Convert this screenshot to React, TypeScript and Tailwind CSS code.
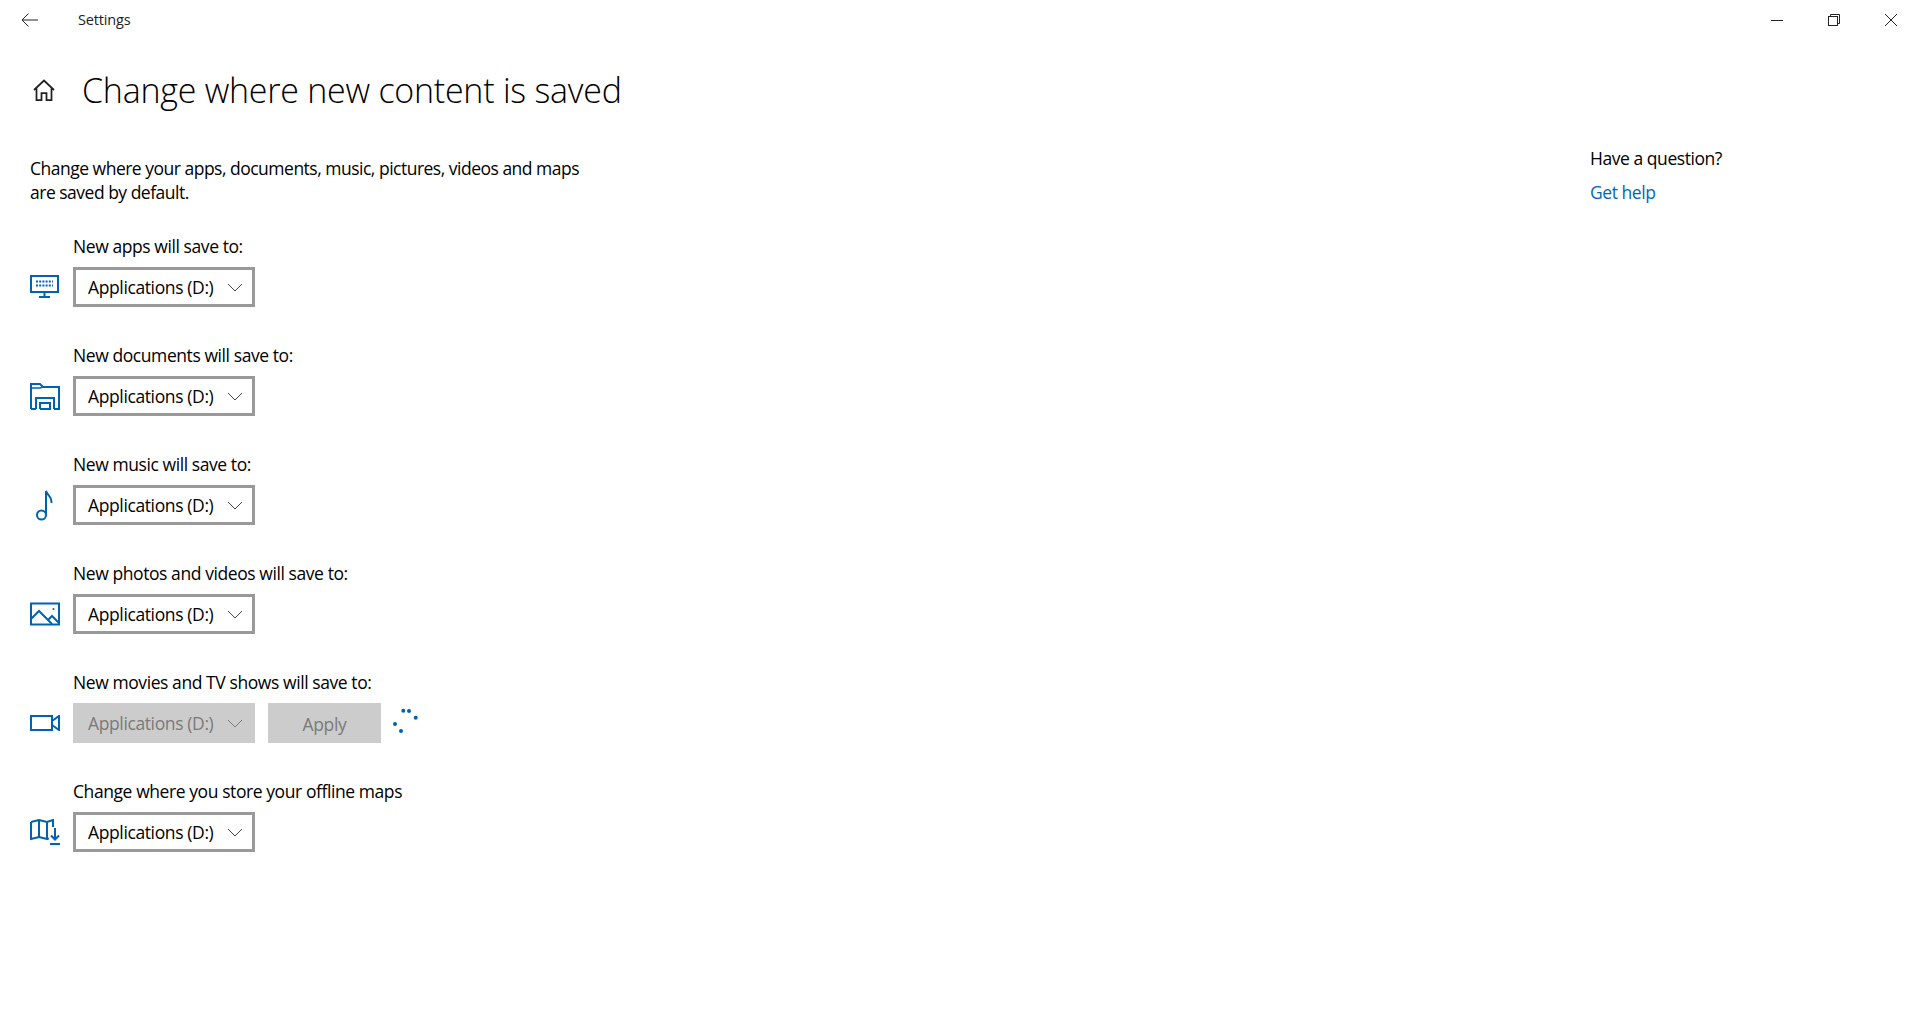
import type { ReactNode } from 'react';

const BLUE = '#0063b1';

function Chevron({ color = '#444444' }: { color?: string }) {
    return (
        <svg width="16" height="9" viewBox="0 0 16 9" fill="none" stroke={color} strokeWidth="1" className="shrink-0">
            <path d="M1 1l7 7 7-7" />
        </svg>
    );
}

function Combo({ disabled = false }: { disabled?: boolean }) {
    return (
        <div
            className={
                disabled
                    ? 'flex h-10 w-[182px] items-center justify-between border-[3px] border-[#cccccc] bg-[#cccccc] pl-3 pr-[9px] text-[#7a7a7a]'
                    : 'flex h-10 w-[182px] items-center justify-between border-[3px] border-[#999999] bg-white pl-3 pr-[9px] text-black'
            }
        >
            <span className="pt-[2px] text-[17.500px] leading-none tracking-[-0.38px]">Applications (D:)</span>
            <Chevron color={disabled ? '#7a7a7a' : '#444444'} />
        </div>
    );
}

function Monitor() {
    return (
        <svg width="30" height="30" viewBox="0 1 30 30" fill="none" stroke={BLUE} strokeWidth="2">
            <rect x="1" y="5" width="27" height="16" />
            <path d="M14.5 21v4M9 26h11" />
            <path d="M6 10.5h17M6 14.5h17" strokeWidth="2" strokeDasharray="2 1.2" />
        </svg>
    );
}

function Documents() {
    return (
        <svg width="30" height="30" viewBox="0 0 30 30" fill="none" stroke={BLUE} strokeWidth="2">
            <path d="M1 28V3h9l3 3h16v22h-5" />
            <path d="M1 7h9l3-1" strokeWidth="1.5" />
            <path d="M1 28h5M6 28V17h18v11" />
            <path d="M10 28v-6h10v6h-10" />
        </svg>
    );
}

function Music() {
    return (
        <svg width="30" height="32" viewBox="0 0 30 32" fill="none" stroke={BLUE} strokeWidth="2">
            <circle cx="11.5" cy="26" r="4.5" />
            <path d="M16 26V2l1 2c1.5 3 5 4 4.5 10" />
        </svg>
    );
}

function Photos() {
    return (
        <svg width="30" height="24" viewBox="0 0 30 24" fill="none" stroke={BLUE} strokeWidth="2">
            <rect x="1" y="1.5" width="28" height="21" />
            <path d="M1 17l8-8 13 13M18 18l4-4 7 7" />
            <circle cx="23.5" cy="7" r="1" fill={BLUE} stroke="none" />
        </svg>
    );
}

function Camera() {
    return (
        <svg width="30" height="16" viewBox="0 0 30 16" fill="none" stroke={BLUE} strokeWidth="2">
            <rect x="1" y="1" width="21" height="14" />
            <path d="M22 6l7-5v14l-7-5" />
        </svg>
    );
}

function OfflineMap() {
    return (
        <svg width="30" height="26" viewBox="0 0 30 26" fill="none" stroke={BLUE} strokeWidth="2">
            <path d="M1 3l8-2 8 2 6-2v7M17 3v17l-8-2-8 2V3M9 1v17M17 20l2-.6" />
            <path d="M25 9v11M21 16.500l4 4 4-4" />
            <path d="M20 25h10" />
        </svg>
    );
}

function Spinner() {
    return (
        <svg width="30" height="30" viewBox="0 0 30 30" fill={BLUE} className="ml-[9px]">
            <circle cx="13.300" cy="2.700" r="2" />
            <circle cx="19" cy="3" r="2" />
            <circle cx="25.700" cy="9.700" r="2" />
            <circle cx="5" cy="16" r="2" />
            <circle cx="11" cy="23" r="2" />
        </svg>
    );
}

function Row({ label, icon, children }: { label: string; icon: ReactNode; children: ReactNode }) {
    return (
        <div className="flex h-[109px] flex-col">
            <div className="ml-[73px] h-[33px] text-[17.500px] leading-[24px] tracking-[-0.42px] text-black">{label}</div>
            <div className="flex h-10 items-center">
                <div className="ml-[30px] flex w-[43px] shrink-0 items-center">{icon}</div>
                {children}
            </div>
        </div>
    );
}

export default function App() {
    return (
        <div className="h-[1030px] w-[1920px] overflow-hidden bg-white font-['Open_Sans','Noto_Sans',sans-serif]">
            {/* barra de titulo */}
            <div className="flex h-10 items-center">
                <svg width="18" height="14" viewBox="0 0 18 14" fill="none" stroke="#222222" strokeWidth="1" className="ml-[21px]">
                    <path d="M17 7H1M7.500 .5L1 7l6.500 6.500" />
                </svg>
                <span className="ml-[39px] text-[14.500px] tracking-[-0.15px] text-[#222222]">Settings</span>
                <div className="ml-auto flex items-center">
                    <svg width="12" height="12" viewBox="0 0 12 12" fill="none" stroke="#222222" strokeWidth="1" className="mr-[45px]">
                        <path d="M0 6.500h12" />
                    </svg>
                    <svg width="12" height="12" viewBox="0 0 12 12" fill="none" stroke="#222222" strokeWidth="1" className="mr-[45px]">
                        <rect x=".5" y="2.500" width="9" height="9" />
                        <path d="M2.500 2.500v-2h9v9h-2" />
                    </svg>
                    <svg width="12" height="12" viewBox="0 0 12 12" fill="none" stroke="#222222" strokeWidth="1" className="mr-[23px]">
                        <path d="M0 0l12 12M12 0L0 12" />
                    </svg>
                </div>
            </div>

            <div className="flex">
                <div className="flex-1">
                    <div className="flex h-[100px] items-center">
                        <svg width="22" height="22" viewBox="0 0 22 22" fill="none" stroke="#222222" strokeWidth="1.750" className="ml-[33px]">
                            <path d="M1 11L11 1.500 21 11M3.500 9v12h5v-7h5v7h5V9" />
                        </svg>
                        <h1 className="ml-[27px] text-[34px] font-light leading-none tracking-[-0.25px] text-black">
                            Change where new content is saved
                        </h1>
                    </div>

                    <p className="ml-[30px] mt-[16px] h-[78px] w-[570px] text-[17.500px] leading-[24px] tracking-[-0.5px] text-black">
                        Change where your apps, documents, music, pictures, videos and maps are saved by default.
                    </p>

                    <Row label="New apps will save to:" icon={<Monitor />}>
                        <Combo />
                    </Row>
                    <Row label="New documents will save to:" icon={<Documents />}>
                        <Combo />
                    </Row>
                    <Row label="New music will save to:" icon={<Music />}>
                        <Combo />
                    </Row>
                    <Row label="New photos and videos will save to:" icon={<Photos />}>
                        <Combo />
                    </Row>
                    <Row label="New movies and TV shows will save to:" icon={<Camera />}>
                        <Combo disabled />
                        <button className="ml-[13px] h-10 w-[113px] bg-[#cccccc] pt-[2px] text-[17.500px] tracking-[-0.38px] text-[#7a7a7a]">Apply</button>
                        <Spinner />
                    </Row>
                    <Row label="Change where you store your offline maps" icon={<OfflineMap />}>
                        <Combo />
                    </Row>
                </div>

                <div className="w-[330px] pt-[106px]">
                    <div className="text-[17.500px] leading-[24px] tracking-[-0.45px] text-black">Have a question?</div>
                    <div className="mt-[10px] text-[17.500px] leading-[24px] tracking-[-0.45px] text-[#0067b8]">Get help</div>
                </div>
            </div>
        </div>
    );
}
